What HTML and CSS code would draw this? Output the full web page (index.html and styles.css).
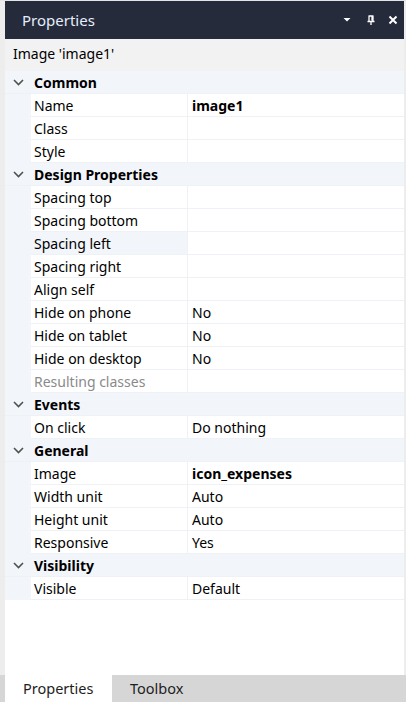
FILE: index.html
```html
<!DOCTYPE html>
<html>
<head>
<meta charset="utf-8">
<link rel="stylesheet" href="styles.css">
</head>
<body>
<div class="window">
  <div class="titlebar">
    <span class="title">Properties</span>
    <div class="title-icons">
      <svg class="ic" width="10" height="10" viewBox="0 0 10 10"><path d="M1.5 3 L8.5 3 L5 6.5 Z" fill="#fff"/></svg>
      <svg class="ic" width="10" height="10" viewBox="0 0 10 10"><path d="M2.5 1 H7.5 M3 1 V6 M7 1 V6 M6 1 V5.5 M1.5 6.5 H8.5 M5 6.5 V10" stroke="#fff" stroke-width="1.3" fill="none"/></svg>
      <svg class="ic" width="10" height="10" viewBox="0 0 10 10"><path d="M1.5 1.5 L8.5 8.5 M8.5 1.5 L1.5 8.5" stroke="#fff" stroke-width="2" fill="none"/></svg>
    </div>
  </div>
  <div class="subtitle">Image 'image1'</div>
  <div class="grid">
    <div class="cat"><span class="chev"><svg width="11" height="7" viewBox="0 0 11 7"><path d="M1 1 L5.5 5.5 L10 1" stroke="#505050" stroke-width="1.6" fill="none"/></svg></span><span class="cat-title">Common</span></div>
    <div class="row"><span class="gut"></span><span class="lbl">Name</span><span class="val bold">image1</span></div>
    <div class="row"><span class="gut"></span><span class="lbl">Class</span><span class="val"></span></div>
    <div class="row"><span class="gut"></span><span class="lbl">Style</span><span class="val"></span></div>

    <div class="cat"><span class="chev"><svg width="11" height="7" viewBox="0 0 11 7"><path d="M1 1 L5.5 5.5 L10 1" stroke="#505050" stroke-width="1.6" fill="none"/></svg></span><span class="cat-title">Design Properties</span></div>
    <div class="row"><span class="gut"></span><span class="lbl">Spacing top</span><span class="val"></span></div>
    <div class="row"><span class="gut"></span><span class="lbl">Spacing bottom</span><span class="val"></span></div>
    <div class="row"><span class="gut"></span><span class="lbl hl">Spacing left</span><span class="val"></span></div>
    <div class="row"><span class="gut"></span><span class="lbl">Spacing right</span><span class="val"></span></div>
    <div class="row"><span class="gut"></span><span class="lbl">Align self</span><span class="val"></span></div>
    <div class="row"><span class="gut"></span><span class="lbl">Hide on phone</span><span class="val">No</span></div>
    <div class="row"><span class="gut"></span><span class="lbl">Hide on tablet</span><span class="val">No</span></div>
    <div class="row"><span class="gut"></span><span class="lbl">Hide on desktop</span><span class="val">No</span></div>
    <div class="row"><span class="gut"></span><span class="lbl dim">Resulting classes</span><span class="val"></span></div>

    <div class="cat"><span class="chev"><svg width="11" height="7" viewBox="0 0 11 7"><path d="M1 1 L5.5 5.5 L10 1" stroke="#505050" stroke-width="1.6" fill="none"/></svg></span><span class="cat-title">Events</span></div>
    <div class="row"><span class="gut"></span><span class="lbl">On click</span><span class="val">Do nothing</span></div>

    <div class="cat"><span class="chev"><svg width="11" height="7" viewBox="0 0 11 7"><path d="M1 1 L5.5 5.5 L10 1" stroke="#505050" stroke-width="1.6" fill="none"/></svg></span><span class="cat-title">General</span></div>
    <div class="row"><span class="gut"></span><span class="lbl">Image</span><span class="val bold">icon_expenses</span></div>
    <div class="row"><span class="gut"></span><span class="lbl">Width unit</span><span class="val">Auto</span></div>
    <div class="row"><span class="gut"></span><span class="lbl">Height unit</span><span class="val">Auto</span></div>
    <div class="row"><span class="gut"></span><span class="lbl">Responsive</span><span class="val">Yes</span></div>

    <div class="cat"><span class="chev"><svg width="11" height="7" viewBox="0 0 11 7"><path d="M1 1 L5.5 5.5 L10 1" stroke="#505050" stroke-width="1.6" fill="none"/></svg></span><span class="cat-title">Visibility</span></div>
    <div class="row"><span class="gut"></span><span class="lbl">Visible</span><span class="val">Default</span></div>
  </div>
  <div class="tabs">
    <div class="tab active">Properties</div>
    <div class="tab">Toolbox</div>
  </div>
</div>
</body>
</html>
```

FILE: styles.css
```css
html, body {
  margin: 0;
  padding: 0;
  background: #ededed;
}
body {
  font-family: "Noto Sans", "Open Sans", sans-serif;
  font-size: 14px;
  color: #000;
}
.window {
  width: 406px;
  height: 702px;
  box-sizing: border-box;
  border-top: 1px solid #e4e4e4;
  display: flex;
  flex-direction: column;
  background: #ededed;
}
.titlebar {
  height: 38px;
  margin-left: 5px;
  margin-right: 2px;
  background: #252b3b;
  display: flex;
  align-items: center;
  justify-content: space-between;
  padding: 0 6px 0 17px;
  box-sizing: border-box;
}
.title {
  color: #e6eefb;
  font-size: 15px;
}
.title-icons {
  display: flex;
  gap: 12px;
  align-items: center;
}
.title-icons .ic:first-child { margin-right: 2px; }
.ic { display: block; }
.subtitle {
  height: 32px;
  margin-left: 5px;
  margin-right: 2px;
  background: #f2f2f2;
  padding-left: 8px;
  line-height: 30px;
  box-sizing: border-box;
}
.grid {
  flex: 1;
  margin-left: 5px;
  margin-right: 2px;
  background: #fff;
  display: flex;
  flex-direction: column;
}
.cat {
  height: 23px;
  background: #f2f5fa;
  display: flex;
  align-items: center;
  border-bottom: 1px solid #eef1f6;
  box-sizing: border-box;
}
.chev {
  width: 26px;
  display: flex;
  justify-content: center;
  padding-left: 1px;
  box-sizing: border-box;
}
.chev svg { display: block; }
.cat-title {
  font-weight: 700;
  padding-left: 3px;
  line-height: 23px;
}
.row {
  height: 23px;
  display: grid;
  grid-template-columns: 26px 157px 1fr;
}
.gut {
  background: #f2f5fa;
}
.lbl, .val {
  border-bottom: 1px solid #eef1f6;
  line-height: 23px;
  white-space: nowrap;
  overflow: hidden;
}
.lbl {
  padding-left: 3px;
  border-right: 1px solid #eef1f6;
}
.val {
  padding-left: 4px;
}
.hl { background: #f2f5fa; }
.dim { color: #8a8a8a; }
.bold { font-weight: 700; }
.tabs {
  height: 27px;
  background: #d6d6d6;
  display: flex;
  padding-left: 5px;
}
.tab {
  line-height: 27px;
  font-size: 14.5px;
  padding: 0 18px;
  color: #1e1e1e;
}
.tab.active {
  background: #fff;
  width: 107px;
  box-sizing: border-box;
}
```
